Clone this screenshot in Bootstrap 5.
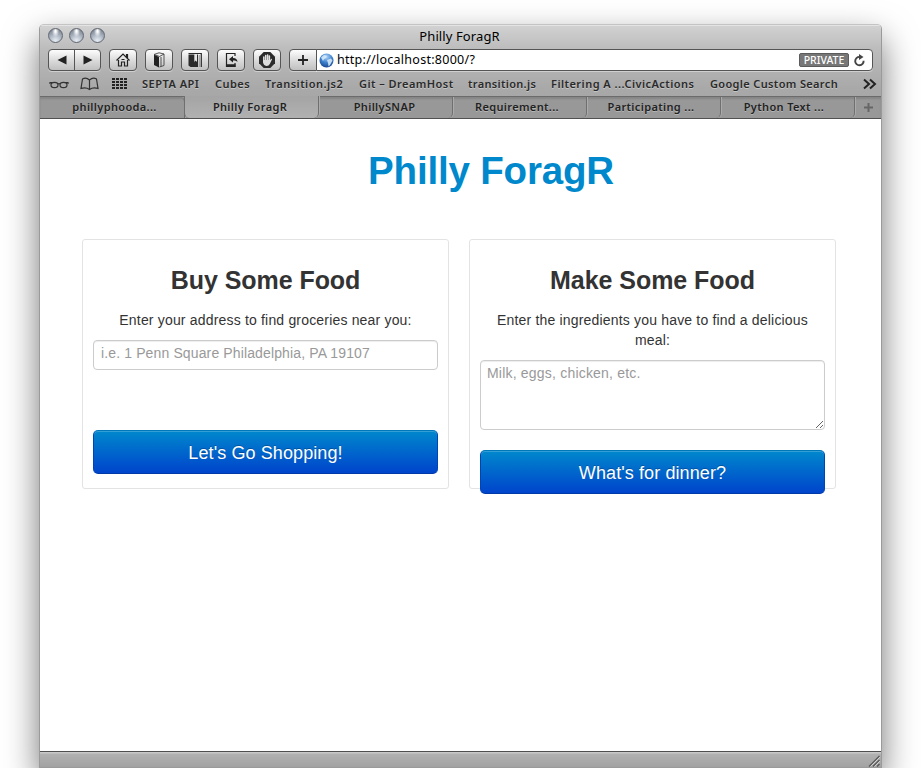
<!DOCTYPE html>
<html lang="en">
<head>
<meta charset="utf-8">
<title>Philly ForagR</title>
<link href="https://cdn.jsdelivr.net/npm/bootstrap@5.3.0/dist/css/bootstrap.min.css" rel="stylesheet">
<style>
body{background:#fff;height:768px;overflow:hidden;font-family:"Liberation Sans",Arial,sans-serif;font-size:14px;line-height:20px;color:#333}
.window{width:843px;height:744px;margin:24px 0 0 39px;border:1px solid #9a9a9a;border-top-color:#c4c4c4;border-radius:5px 5px 0 0;box-shadow:0 15px 34px rgba(0,0,0,.55);background:#fff;overflow:hidden}
.chrome-top{height:94px;background:linear-gradient(#d2d2d2,#bcbcbc 24px,#a9a9a9 62px,#a3a3a3 94px);font-family:"Noto Sans",sans-serif;color:#111;box-shadow:inset 0 1px #e4e4e4;flex:none}
.title-row{height:23px;position:relative;padding-left:8px;gap:6px}
.window-title{position:absolute;left:0;right:2px;top:1px;text-align:center;font-size:13px;line-height:20px;color:#000;letter-spacing:.1px}
.orb{width:15px;height:15px;border-radius:50%;margin-top:-2px;background:radial-gradient(ellipse at 50% 18%,#fff 5%,rgba(255,255,255,0) 38%),radial-gradient(circle at 50% 90%,#e0e6ee 8%,#a1abb8 55%,#6c7480);border:1px solid #626872}
.tool-row{height:25px;padding:1px 8px 0 8px}
.tool{width:28px;height:22px;border:1px solid #555;border-radius:4px;background:linear-gradient(#fdfdfd,#d9d9d9 55%,#c0c0c0);display:flex;align-items:center;justify-content:center;box-shadow:0 1px rgba(255,255,255,.4);flex:none}
.tool svg,.mark-row svg{display:block}
.pair{width:53px;margin-right:8px}
.pair span{flex:1;height:100%;display:flex;align-items:center;justify-content:center}
.pair span+span{border-left:1px solid #555}
.spaced{margin-right:8px}
.address{height:22px;border:1px solid #555;border-radius:0 4px 4px 0;background:#fff;margin-left:-1px;padding:0 6px 0 2px;font-size:12.5px;line-height:20px;color:#000;letter-spacing:.27px;box-shadow:0 1px rgba(255,255,255,.4)}
.globe{margin-right:3px}
.private-tag{height:14px;width:50px;background:#777;border:1px solid #5c5c5c;border-radius:2px;color:#fff;font-size:10.5px;font-weight:500;line-height:12px;text-align:center;letter-spacing:0;margin-right:4px}
.mark-row{height:21px;font-size:11px;font-weight:600;line-height:20px;color:#2a2a2a;text-shadow:0 1px rgba(255,255,255,.35);padding-left:9px;margin-bottom:2px}
.mark-row span{flex:none;white-space:nowrap}
.mk-book{margin-left:10px}.mk-grid{margin-left:11px}
.m1{width:58px;margin-left:14px;letter-spacing:.5px}
.m2{width:35px;margin-left:15px;letter-spacing:.45px}
.m3{width:78px;margin-left:15px;letter-spacing:.48px}
.m4{width:94px;margin-left:16px;letter-spacing:.45px}
.m5{width:68px;margin-left:15px;letter-spacing:.32px}
.m6{width:143px;margin-left:15px;letter-spacing:.46px}
.m7{width:128px;margin-left:16px;letter-spacing:.35px}
.tabs-row{height:23px;background:#989898;border-top:1px solid #6b6b6b;border-bottom:1px solid #505050;font-size:11px;font-weight:600;line-height:20px;color:#222;text-shadow:0 1px rgba(255,255,255,.3);box-shadow:inset 0 2px 2px rgba(0,0,0,.12)}
.tab-item{width:134px;padding-right:5px;text-align:center;border-right:1px solid #6f6f6f;border-radius:0 0 5px 0;letter-spacing:.35px;height:21px;box-shadow:1px 0 #ababab;flex:none}
.tab-item.end{padding-right:7px}
.tab-item.mid{padding-right:2px}
.tab-item.first{width:145px;padding:0 0 0 5px;border-radius:0 5px 0 0}
.tab-item.current{background:linear-gradient(#a4a4a4,#b1b1b1);border-radius:0 0 5px 5px;margin-top:-1px;height:22px;line-height:22px;border-left:1px solid #6f6f6f;margin-left:-1px;width:135px;padding-right:3px}
.page{height:632px;padding:0 42px}
.brand{font-size:38.5px;line-height:40px;font-weight:700;color:#08c;text-align:center;padding:32px 0 0 61px;margin:0;letter-spacing:-.18px}
.panels{gap:20px;margin-top:48px}
.panel{width:367px;height:250px;border:1px solid #e3e3e3;border-radius:3px;padding:20px 10px 0;text-align:center;flex:none}
.panel h2{font-size:25px;line-height:40px;font-weight:700;margin:0;letter-spacing:-.05px}
.panel p{margin:0 0 10px;padding:0 10px;letter-spacing:.18px}
.panel h2+p{padding-top:10px}
.panel .form-control{font:14px/20px "Liberation Sans",Arial,sans-serif;letter-spacing:.13px;padding:2px 6px 6px 7px;border:1px solid #ccc;border-radius:4px;box-shadow:inset 0 1px 1px rgba(0,0,0,.075);height:30px;color:#555}
.panel textarea.form-control{height:70px;min-height:0;padding-left:6px;display:block;letter-spacing:.2px}
.form-control::placeholder{color:#999;opacity:1}
.btn-forage{height:44px;width:100%;border:1px solid;border-color:#0077b8 #0044b8 #003aa8;border-radius:5px;background:linear-gradient(#08c,#04c);color:#fff;font-size:18px;line-height:20px;letter-spacing:.1px;padding:12px 10px 10px;text-shadow:0 -1px rgba(0,0,0,.25);box-shadow:inset 0 1px rgba(255,255,255,.2)}
.gap-big{margin-top:60px}.gap-small{margin-top:20px}
.status{height:17px;border-top:1px solid #4f4f4f;border-bottom:1px solid #808080;background:linear-gradient(#c9c9c9 1px,#b1b1b1 2px,#a2a2a2)}
</style>
<script src="https://cdn.jsdelivr.net/npm/bootstrap@5.3.0/dist/js/bootstrap.bundle.min.js"></script>
</head>
<body>
<div class="window d-flex flex-column">
  <header class="chrome-top">
    <div class="title-row d-flex align-items-center">
      <i class="orb"></i><i class="orb"></i><i class="orb"></i>
      <div class="window-title">Philly ForagR</div>
    </div>
    <div class="tool-row d-flex">
      <div class="tool pair"><span><svg width="10" height="10"><path d="M9.500 .5v9L.5 5z" fill="#222"/></svg></span><span><svg width="10" height="10"><path d="M.5.5v9L9.500 5z" fill="#222"/></svg></span></div>
      <div class="tool spaced"><svg width="16" height="16" fill="none" stroke="#222" stroke-width="1.200"><path d="M1.500 8.500 8 2l6.500 6.500M3.500 8v6h3v-4h3v4h3V8M11.500 5V2.500h1V6"/><path d="M6.500 7.500h3" stroke-width="1.200"/></svg></div>
      <div class="tool spaced"><svg width="16" height="16"><path d="M3 2.500 8 5v10.500L3 13z" fill="#222"/><path d="M3 2.500 8 .8l5 1.200L8.500 4.500zM10 5v9.500M13 2v11.500l-4.500 1.500" fill="none" stroke="#444" stroke-width=".9"/></svg></div>
      <div class="tool spaced"><svg width="16" height="16"><path d="M1.500 2.500H11V15H3.500l-2-1.500z" fill="#2b2b2b"/><path d="M1.500 1.500h12.800V15" stroke="#2b2b2b" stroke-width="1.200" fill="none"/><path d="M12.300 3v12" stroke="#888" stroke-width=".8"/><path d="M7.300 2h2.700v8L8.600 8.600 7.300 10z" fill="#e6e6e6"/></svg></div>
      <div class="tool spaced"><svg width="16" height="16"><path d="M12 4V1.500H3.500v13H12V11" fill="none" stroke="#222" stroke-width="1.200"/><path d="M3 12.200h9.500V15H3z" fill="#222"/><path d="M6 7.200 10 4v2c2.800 0 4.300 1.200 4.500 4-1.200-1.200-2.500-1.600-4.500-1.600v2z" fill="#222"/></svg></div>
      <div class="tool spaced"><svg width="18" height="18"><path d="M5.700 1h6.600L17 5.700v6.600L12.300 17H5.700L1 12.300V5.700z" fill="#2b2b2b"/><path d="M5.800 6v5M7.700 4.500v6M9.600 4v6M11.400 5v6" stroke="#e2e2e2" stroke-width="1.500" stroke-linecap="round"/><path d="M5 9h7.200l1-1.200q1-.2.800.8L11.800 13q-1 2-3.300 1.900Q5.300 14.500 5 11z" fill="#dcdcdc"/></svg></div>
      <div class="tool rounded-end-0"><svg width="12" height="12"><path d="M6 1v10M1 6h10" stroke="#222" stroke-width="1.800"/></svg></div>
      <div class="address flex-grow-1 d-flex align-items-center">
        <svg width="15" height="15" class="globe flex-shrink-0"><defs><radialGradient id="g" cx=".5" cy=".25" r=".8"><stop offset="0" stop-color="#a9d0f5"/><stop offset=".5" stop-color="#3f82cf"/><stop offset="1" stop-color="#123f86"/></radialGradient></defs><circle cx="7.500" cy="7.500" r="7" fill="url(#g)"/><path d="M2 4.500 5 2l3 .8L7 5l-2 1.200L4 8zM8 7l4-1.500 1.500 2L11 12l-1.500 1.500L9 10z" fill="#dcecf8" opacity=".85"/></svg>
        <span class="flex-grow-1">http://localhost:8000/?</span>
        <span class="private-tag">PRIVATE</span>
        <svg width="13" height="13"><path d="M10.600 6.800A4.200 4.200 0 1 1 6.500 2.900" fill="none" stroke="#444" stroke-width="1.900"/><path d="M6 0l4.500 3L6 6z" fill="#444"/></svg>
      </div>
    </div>
    <div class="mark-row d-flex align-items-center">
      <svg width="21" height="12" fill="none" stroke="#333" stroke-width="1.200"><ellipse cx="5.500" cy="7" rx="3.500" ry="2.700"/><ellipse cx="14.500" cy="7" rx="3.500" ry="2.700"/><path d="M9 6q1-.8 2 0M1 4.500h5M14 4.500h5M1 4v2M19 4v2"/></svg>
      <svg width="20" height="14" class="mk-book" fill="none" stroke="#333" stroke-width="1.200"><path d="M9.500 3Q6-.2 2.500 2L1 11.500q5-1.500 8.500 1 3.500-2.500 8.500-1L16.500 2Q13-.2 9.500 3zV12"/></svg>
      <svg width="17" height="13" class="mk-grid"><path d="M1 2h15M1 5h15M1 8h15M1 11h15" stroke="#222" stroke-width="2" stroke-dasharray="3 1"/></svg>
      <span class="m1">SEPTA API</span><span class="m2">Cubes</span><span class="m3">Transition.js2</span><span class="m4">Git – DreamHost</span><span class="m5">transition.js</span><span class="m6">Filtering A ...CivicActions</span><span class="m7">Google Custom Search</span>
      <svg class="ms-auto me-1" width="15" height="12" fill="none" stroke="#222" stroke-width="2"><path d="M2 1.500 7 6l-5 4.500M8 1.500 13 6l-5 4.500"/></svg>
    </div>
    <div class="tabs-row d-flex">
      <div class="tab-item first">phillyphooda...</div><div class="tab-item current">Philly ForagR</div><div class="tab-item mid">PhillySNAP</div><div class="tab-item">Requirement...</div><div class="tab-item">Participating ...</div><div class="tab-item end">Python Text ...</div>
      <div class="flex-grow-1 d-flex align-items-center justify-content-center"><svg width="9" height="9"><path d="M4.500 0v9M0 4.500h9" stroke="#666" stroke-width="2"/></svg></div>
    </div>
  </header>
  <main class="page flex-shrink-0">
    <h1 class="brand">Philly ForagR</h1>
    <div class="panels d-flex">
      <section class="panel">
        <h2>Buy Some Food</h2>
        <p>Enter your address to find groceries near you:</p>
        <input class="form-control" placeholder="i.e. 1 Penn Square Philadelphia, PA 19107">
        <button class="btn btn-forage gap-big">Let's Go Shopping!</button>
      </section>
      <section class="panel">
        <h2>Make Some Food</h2>
        <p>Enter the ingredients you have to find a delicious meal:</p>
        <textarea class="form-control" placeholder="Milk, eggs, chicken, etc."></textarea>
        <button class="btn btn-forage gap-small">What's for dinner?</button>
      </section>
    </div>
  </main>
  <footer class="status d-flex justify-content-end flex-shrink-0"><svg width="13" height="15"><path d="M1 14.500 11.500 4M5 14.500 11.500 8M9 14.500l2.500-2.500" stroke="#555" stroke-width="1.200"/><path d="M2.500 14.500 12 5M6.500 14.500 12 9" stroke="#ddd" stroke-width=".8"/></svg></footer>
</div>
</body>
</html>
